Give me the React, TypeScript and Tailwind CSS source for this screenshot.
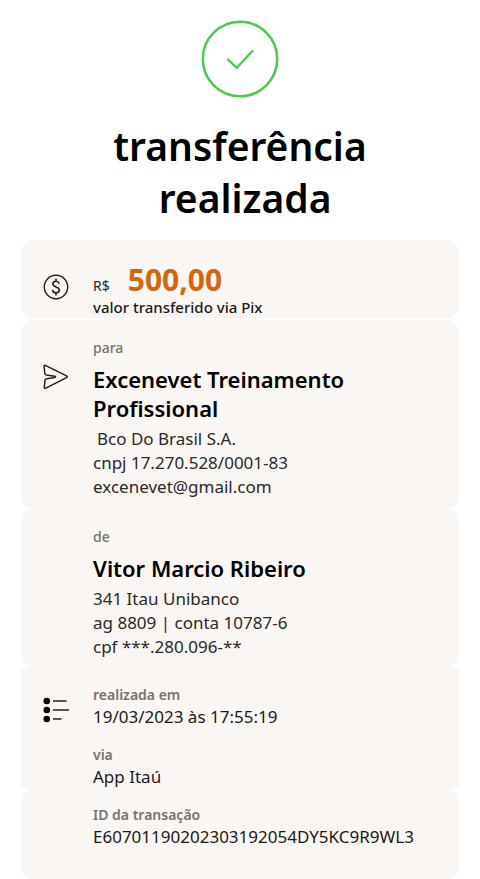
import React from 'react';

const CheckIcon: React.FC = () => (
  <svg className="h-[78px] w-[78px]" viewBox="0 0 78 78" fill="none" stroke="#4dc954">
    <circle cx="39" cy="39" r="37.2" strokeWidth="2.6" />
    <path d="M27 39.5L35.7 47.8L51.5 31" strokeWidth="2.4" strokeLinecap="round" />
  </svg>
);

const CoinIcon: React.FC = () => (
  <svg className="h-[26px] w-[26px]" viewBox="0 0 26 26" fill="none" stroke="#222" strokeWidth="1.4" strokeLinecap="round">
    <circle cx="13" cy="13" r="11.7" />
    <path
      strokeWidth="1.6"
      d="M16 9.2C15.6 7.9 14.5 7.2 13 7.2C11.1 7.2 9.9 8.2 9.9 9.8C9.9 11.6 11.3 12.3 13 12.9C14.9 13.5 16.3 14.3 16.3 16.1C16.3 17.8 15 18.8 13 18.8C11.2 18.8 10 17.9 9.7 16.5M13 5V7.2M13 18.8V21"
    />
  </svg>
);

const SendIcon: React.FC = () => (
  <svg className="h-[26px] w-[26px]" viewBox="0 0 26 26" fill="none" stroke="#222" strokeWidth="1.5" strokeLinejoin="round">
    <path d="M2.2 1.3L23.6 11.9Q25 12.8 23.6 13.7L2.8 24.2Q1.3 24.8 1.3 23.2L2 16.4Q2.2 15 3.6 14.8L11.8 13.4Q13.4 12.8 11.8 12.3L3.4 11Q2 10.7 1.8 9.3L1.1 2.3Q1.1 1 2.2 1.3Z" />
  </svg>
);

const ListIcon: React.FC = () => (
  <svg className="h-[26px] w-[26px]" viewBox="0 0 26 26" stroke="#222" strokeWidth="1.5">
    <g fill="#000" stroke="none">
      <circle cx="3.8" cy="4" r="3.3" />
      <circle cx="3.8" cy="13" r="3.3" />
      <circle cx="3.8" cy="22" r="3.3" />
    </g>
    <path d="M10 4H23.5M10 13H26M10 22H18.5" />
  </svg>
);

interface RowProps {
  icon?: React.ReactNode;
  iconClass?: string;
  className: string;
  children: React.ReactNode;
}

const Row: React.FC<RowProps> = ({ icon, iconClass, className, children }) => (
  <section className={`flex gap-6 bg-[#faf6f3] px-[22px] ${className}`}>
    <div className={`w-[26px] shrink-0 ${iconClass ?? ''}`}>{icon}</div>
    <div className="min-w-0 flex-1">{children}</div>
  </section>
);

const Field: React.FC<{ label: string; value: string }> = ({ label, value }) => (
  <div>
    <dt className="text-[14px] leading-5 font-semibold text-[#77726f]">{label}</dt>
    <dd className="text-[17px] leading-6 text-[#1a1a1a]">{value}</dd>
  </div>
);

const App: React.FC = () => {
  return (
    <main className="bg-white px-[21px] pt-5 font-['Noto_Sans',sans-serif] text-[#2b2928]">
      <header className="flex flex-col items-center text-center">
        <CheckIcon />
        <h1 className="mt-[22px] text-[39px] leading-[52px] font-semibold text-black">
          transferência
          <br />
          &nbsp;realizada
        </h1>
      </header>

      <Row icon={<CoinIcon />} iconClass="pt-3" className="mt-4 rounded-xl pt-[22px] pb-[2px]">
        <p className="flex items-baseline gap-[18px]">
          <span className="text-[14px] leading-6">R$</span>
          <span className="text-[30px] leading-9 font-bold text-[#d4660f]">500,00</span>
        </p>
        <p className="text-[15px] leading-[18px] font-medium text-[#1a1a1a]">valor transferido via Pix</p>
      </Row>

      <Row icon={<SendIcon />} iconClass="pt-[26px]" className="mt-[2px] rounded-xl pt-[18px] pb-[10px]">
        <p className="text-[14px] leading-5 font-medium text-[#77726f]">para</p>
        <h2 className="mt-[7px] text-[22px] leading-[29px] font-semibold text-black">
          Excenevet Treinamento Profissional
        </h2>
        <div className="mt-1 text-[17px] leading-6">
          <p className="pl-1">Bco Do Brasil S.A.</p>
          <p>cnpj 17.270.528/0001-83</p>
          <p>excenevet@gmail.com</p>
        </div>
      </Row>

      <Row className="rounded-xl pt-[18px] pb-2">
        <p className="text-[14px] leading-5 font-medium text-[#77726f]">de</p>
        <h2 className="mt-[7px] text-[22px] leading-[29px] font-semibold text-black">Vitor Marcio Ribeiro</h2>
        <div className="mt-1 text-[17px] leading-6">
          <p>341 Itau Unibanco</p>
          <p>ag 8809 | conta 10787-6</p>
          <p>cpf ***.280.096-**</p>
        </div>
      </Row>

      <Row icon={<ListIcon />} iconClass="pt-3" className="pt-[18px]">
        <dl className="flex flex-col gap-4">
          <Field label="realizada em" value="19/03/2023 às 17:55:19" />
          <Field label="via" value="App Itaú" />
        </dl>
      </Row>

      <Row className="rounded-xl pt-4 pb-[30px]">
        <dl>
          <Field label="ID da transação" value="E60701190202303192054DY5KC9R9WL3" />
        </dl>
      </Row>
    </main>
  );
};

export default App;
